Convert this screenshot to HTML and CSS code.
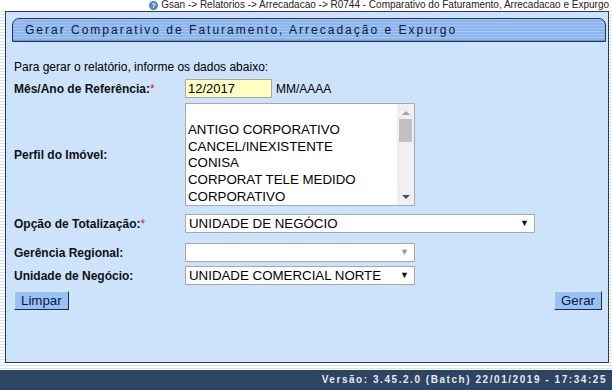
FILE: index.html
```html
<!DOCTYPE html>
<html lang="pt">
<head>
<meta charset="utf-8">
<title>Gerar Comparativo</title>
<link rel="stylesheet" href="styles.css">
</head>
<body>
<div class="page">
  <div class="crumb">
    <svg class="help" width="9" height="9" viewBox="0 0 10 10"><circle cx="5" cy="5" r="4.6" fill="#4f86c9" stroke="#2f5f9e" stroke-width="0.6"/><text x="5" y="8" font-size="7.5" font-family="Liberation Sans, Arial, sans-serif" font-weight="bold" fill="#fff" text-anchor="middle">?</text></svg>
    <span>Gsan -&gt; Relatorios -&gt; Arrecadacao -&gt; R0744 - Comparativo do Faturamento, Arrecadacao e Expurgo</span>
  </div>
  <div class="panel">
    <div class="title">Gerar Comparativo de Faturamento, Arrecadação e Expurgo</div>
    <div class="form">
      <p class="intro">Para gerar o relatório, informe os dados abaixo:</p>
      <div class="row r1">
        <label class="lbl">Mês/Ano de Referência:<span class="req">*</span></label>
        <div class="field">
          <div class="input">12/2017</div>
          <span class="hint">MM/AAAA</span>
        </div>
      </div>
      <div class="row r2">
        <label class="lbl">Perfil do Imóvel:</label>
        <div class="listbox">
          <div class="items">
            <div class="item">&nbsp;</div>
            <div class="item">ANTIGO CORPORATIVO</div>
            <div class="item">CANCEL/INEXISTENTE</div>
            <div class="item">CONISA</div>
            <div class="item">CORPORAT TELE MEDIDO</div>
            <div class="item">CORPORATIVO</div>
          </div>
          <div class="scroll">
            <span class="sarrow up"></span>
            <span class="thumb"></span>
            <span class="sarrow down"></span>
          </div>
        </div>
      </div>
      <div class="row r3">
        <label class="lbl">Opção de Totalização:<span class="req">*</span></label>
        <div class="select wide"><span>UNIDADE DE NEGÓCIO</span><span class="arrow">▼</span></div>
      </div>
      <div class="row r4">
        <label class="lbl">Gerência Regional:</label>
        <div class="select narrow"><span></span><span class="arrow dis">▼</span></div>
      </div>
      <div class="row r5">
        <label class="lbl">Unidade de Negócio:</label>
        <div class="select narrow"><span>UNIDADE COMERCIAL NORTE</span><span class="arrow">▼</span></div>
      </div>
      <div class="buttons">
        <button class="btn">Limpar</button>
        <button class="btn">Gerar</button>
      </div>
    </div>
  </div>
  <div class="footer">Versão: 3.45.2.0 (Batch) 22/01/2019 - 17:34:25</div>
</div>
</body>
</html>
```
FILE: styles.css
```css
html, body {
  margin: 0;
  padding: 0;
}
body {
  width: 612px;
  height: 390px;
  overflow: hidden;
  background: repeating-linear-gradient(to bottom, #ffffff 0, #ffffff 2px, #d5e1ee 2px, #d5e1ee 3px);
  font-family: "Liberation Sans", Arial, sans-serif;
  color: #000;
}
.page {
  display: flex;
  flex-direction: column;
  height: 390px;
}
.crumb {
  height: 10px;
  display: flex;
  justify-content: flex-end;
  align-items: center;
  gap: 3px;
  padding-right: 3px;
  font-size: 10px;
  line-height: 10px;
  color: #222;
  background: #fff;
  white-space: nowrap;
}
.help { flex: none; }
.panel {
  margin: 1px 3px 0 5px;
  height: 350px;
  border: 1px solid #2b3b53;
  background: #cce3fb;
  box-sizing: content-box;
}
.title {
  margin: 6px 2px 0 6px;
  height: 22px;
  border: 1px solid #25344c;
  border-radius: 7px 7px 0 0;
  background: repeating-linear-gradient(to bottom, #a4c7f3 0, #a4c7f3 1px, #8bb5ec 1px, #8bb5ec 3px);
  font-size: 12px;
  line-height: 23px;
  letter-spacing: 2px;
  padding-left: 12px;
  color: #0b1a33;
  box-shadow: inset 0 -1px 0 #6f97cf;
}
.form {
  padding: 0 6px 0 8px;
  font-size: 12px;
}
.intro {
  margin: 18px 0 0 0;
  line-height: 14px;
}
.row {
  display: flex;
  align-items: center;
}
.lbl {
  width: 171px;
  flex: none;
  font-weight: bold;
  color: #111;
}
.req { color: #d22; font-weight: normal; }
.r1 { margin-top: 5px; }
.field { display: flex; align-items: center; gap: 4px; }
.input {
  width: 83px;
  height: 17px;
  border: 1px solid #a9a9a9;
  background: #ffffc4;
  font-size: 13px;
  line-height: 17px;
  padding-left: 2px;
}
.hint { font-size: 12px; }
.r2 { margin-top: 5px; }
.listbox {
  width: 228px;
  height: 101px;
  border: 1px solid #a9a9a9;
  background: #fff;
  display: flex;
}
.items {
  flex: 1;
  padding: 1px 0 0 2px;
  font-size: 13.3px;
  line-height: 16.8px;
  overflow: hidden;
  white-space: nowrap;
}
.scroll {
  width: 17px;
  background: #f0f0f0;
  display: flex;
  flex-direction: column;
  align-items: center;
}
.sarrow {
  width: 0;
  height: 0;
  border-left: 4px solid transparent;
  border-right: 4px solid transparent;
}
.sarrow.up { border-bottom: 4px solid #a3a3a3; margin-top: 7px; }
.sarrow.down { border-top: 4px solid #505050; margin-top: auto; margin-bottom: 6px; }
.thumb {
  width: 13px;
  height: 23px;
  background: #c1c1c1;
  margin-top: 4px;
}
.r3 { margin-top: 8px; }
.select {
  height: 17px;
  border: 1px solid #a9a9a9;
  background: #fff;
  display: flex;
  align-items: center;
  justify-content: space-between;
  font-size: 13.3px;
  line-height: 17px;
  padding: 0 5px 0 3px;
  box-sizing: content-box;
}
.select.wide { width: 340px; }
.select.narrow { width: 220px; }
.arrow { font-size: 9px; color: #111; }
.arrow.dis { color: #9a9a9a; }
.r4 { margin-top: 10px; }
.r5 { margin-top: 4px; }
.buttons {
  margin-top: 6px;
  display: flex;
  justify-content: space-between;
}
.btn {
  height: 19px;
  padding: 0 6px;
  font-family: "Liberation Sans", Arial, sans-serif;
  font-size: 13.3px;
  line-height: 15px;
  color: #0b1a33;
  background: #98c1f5;
  border: 1px solid;
  border-color: #d8e8fb #1e2e48 #1e2e48 #d8e8fb;
  margin: 0;
}
.footer {
  margin-top: 7px;
  height: 20px;
  background: #2d4560;
  color: #e4ebf3;
  font-size: 10px;
  font-weight: bold;
  letter-spacing: 1.55px;
  line-height: 20px;
  text-align: right;
  padding-right: 5px;
}
```
